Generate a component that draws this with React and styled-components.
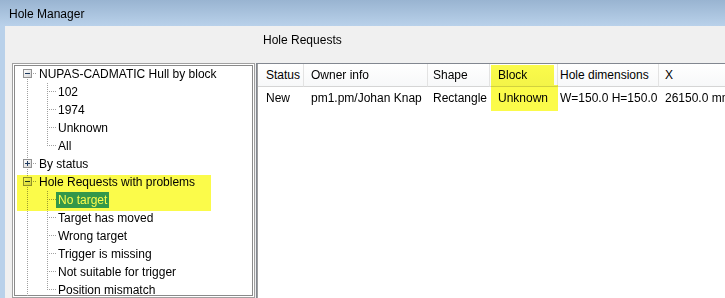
import React from 'react'
import styled, { createGlobalStyle } from 'styled-components'

const GlobalStyle = createGlobalStyle`
  body {
    margin: 0;
    font-family: "Liberation Sans", Arial, sans-serif;
    font-size: 12px;
    color: #000;
    background: #f0f0f0;
    overflow: hidden;
  }
`

const Window = styled.div`
  width: 725px;
  height: 298px;
  display: flex;
  flex-direction: column;
  overflow: hidden;
`

const TitleBar = styled.div`
  height: 26px;
  flex: none;
  display: flex;
  align-items: center;
  padding-left: 9px;
  padding-top: 1px;
  box-sizing: border-box;
  background: linear-gradient(#99b4d1, #b9d1ea);
`

const Body = styled.div`
  flex: 1;
  min-height: 0;
  display: flex;
  flex-direction: column;
  border-left: 5px solid #b9d1ea;
  background: #f0f0f0;
  padding-left: 7px;
`

const Heading = styled.div`
  height: 37px;
  flex: none;
  box-sizing: border-box;
  padding: 7px 0 0 251px;
  line-height: 14px;
`

const Panes = styled.div`
  flex: 1;
  min-height: 0;
  display: flex;
`

const TreeBox = styled.div`
  width: 243px;
  flex: none;
  box-sizing: border-box;
  border: 1px solid #a0a0a0;
  box-shadow: inset 0 0 0 1px #fff, inset 0 0 0 2px #8a8a8a;
  background: #fff;
  padding: 1px 2px 0 2px;
  overflow: hidden;
`

const TreeRow = styled.div`
  height: 18px;
  display: flex;
  align-items: center;
  white-space: nowrap;
`

const Label = styled.span`
  padding: 0 2px;
  height: 16px;
  line-height: 16px;
  background: ${p => (p.$selected ? '#3399ff' : 'transparent')};
  color: ${p => (p.$selected ? '#fff' : '#000')};
`

const Marked = styled.div`
  position: relative;
  &::after {
    content: '';
    position: absolute;
    left: 2px;
    width: 194px;
    top: 2px;
    bottom: -2px;
    background: #fbfb4a;
    mix-blend-mode: multiply;
    pointer-events: none;
  }
`

const TablePanel = styled.div`
  flex: 1;
  min-width: 0;
  margin-left: 1px;
  border: 1px solid #828790;
  border-right: none;
  border-bottom: none;
  box-shadow: inset 1px 0 0 #a0a0a0;
  background: #fff;
  overflow: hidden;
`

const Grid = styled.div`
  display: grid;
  grid-template-columns: ${p => p.$cols};
  padding-left: 1px;
`

const HeadCell = styled.div`
  position: relative;
  height: 23px;
  box-sizing: border-box;
  display: flex;
  align-items: center;
  padding-left: ${p => p.$pad}px;
  border-right: 1px solid #e3e3e3;
  border-bottom: 1px solid #d5d5d5;
  background: linear-gradient(#ffffff, #f7f8f9);
  white-space: nowrap;
  ${p => p.$marked && `
    &::after {
      content: '';
      position: absolute;
      left: 1px;
      right: 3px;
      top: 1px;
      bottom: 1px;
      background: #fbfb4a;
      mix-blend-mode: multiply;
    }
  `}
`

const Cell = styled.div`
  position: relative;
  height: 21px;
  display: flex;
  align-items: center;
  padding-left: ${p => p.$pad}px;
  white-space: nowrap;
  ${p => p.$marked && `
    &::after {
      content: '';
      position: absolute;
      left: 1px;
      right: 0;
      top: -2px;
      bottom: -3px;
      background: #fbfb4a;
      mix-blend-mode: multiply;
    }
  `}
`

// dotted connector lines + expander box, drawn per row
const Dots = ({ x1, y1, x2, y2 }) => (
  <line
    x1={x1}
    y1={y1}
    x2={x2}
    y2={y2}
    stroke="#a0a0a0"
    strokeDasharray="1 1"
    shapeRendering="crispEdges"
  />
)

const Expander = ({ open }) => (
  <g shapeRendering="crispEdges">
    <rect x="8.5" y="4.5" width="8" height="8" fill="url(#boxfill)" stroke="#919191" />
    <line x1="10" y1="8.5" x2="15" y2="8.5" stroke="#1e3a5f" />
    {!open && <line x1="12.5" y1="6" x2="12.5" y2="11" stroke="#1e3a5f" />}
  </g>
)

const RootGuide = ({ first, open }) => (
  <svg width="22" height="18" style={{ flex: 'none' }}>
    <defs>
      <linearGradient id="boxfill" x1="0" y1="0" x2="1" y2="1">
        <stop offset="0" stopColor="#ffffff" />
        <stop offset="1" stopColor="#d4d4d4" />
      </linearGradient>
    </defs>
    {!first && <Dots x1="12.5" y1="0" x2="12.5" y2="4" />}
    <Dots x1="12.5" y1="14" x2="12.5" y2="18" />
    <Dots x1="18" y1="8.5" x2="22" y2="8.5" />
    <Expander open={open} />
  </svg>
)

const ChildGuide = ({ last }) => (
  <svg width="41" height="18" style={{ flex: 'none' }}>
    <Dots x1="12.5" y1="0" x2="12.5" y2="18" />
    <Dots x1="32.5" y1="0" x2="32.5" y2={last ? 9 : 18} />
    <Dots x1="34" y1="8.5" x2="41" y2="8.5" />
  </svg>
)

const columns = [
  { label: 'Status', width: 46, pad: 8 },
  { label: 'Owner info', width: 124, pad: 7 },
  { label: 'Shape', width: 62, pad: 5 },
  { label: 'Block', width: 68, pad: 8, marked: true },
  { label: 'Hole dimensions', width: 101, pad: 2 },
  { label: 'X', width: 140, pad: 6 },
]

const rows = [
  ['New', 'pm1.pm/Johan Knap', 'Rectangle', 'Unknown', 'W=150.0 H=150.0', '26150.0 mm'],
]

const blocks = ['102', '1974', 'Unknown', 'All']
const problems = [
  'Target has moved',
  'Wrong target',
  'Trigger is missing',
  'Not suitable for trigger',
  'Position mismatch',
]

const App = () => {
  const cols = columns.map(c => `${c.width}px`).join(' ')

  return (
    <Window>
      <GlobalStyle />
      <TitleBar>Hole Manager</TitleBar>
      <Body>
        <Heading>Hole Requests</Heading>
        <Panes>
          <TreeBox>
            <TreeRow>
              <RootGuide first open />
              <Label>NUPAS-CADMATIC Hull by block</Label>
            </TreeRow>
            {blocks.map((b, i) => (
              <TreeRow key={b}>
                <ChildGuide last={i === blocks.length - 1} />
                <Label>{b}</Label>
              </TreeRow>
            ))}
            <TreeRow>
              <RootGuide />
              <Label>By status</Label>
            </TreeRow>
            <Marked>
              <TreeRow>
                <RootGuide open />
                <Label>Hole Requests with problems</Label>
              </TreeRow>
              <TreeRow>
                <ChildGuide />
                <Label $selected>No target</Label>
              </TreeRow>
            </Marked>
            {problems.map((p, i) => (
              <TreeRow key={p}>
                <ChildGuide last={i === problems.length - 1} />
                <Label>{p}</Label>
              </TreeRow>
            ))}
          </TreeBox>

          <TablePanel>
            <Grid $cols={cols}>
              {columns.map(c => (
                <HeadCell key={c.label} $pad={c.pad} $marked={c.marked}>
                  {c.label}
                </HeadCell>
              ))}
              {rows.map((r, ri) =>
                r.map((v, ci) => (
                  <Cell key={ri + '-' + ci} $pad={columns[ci].pad} $marked={columns[ci].marked}>
                    {v}
                  </Cell>
                ))
              )}
            </Grid>
          </TablePanel>
        </Panes>
      </Body>
    </Window>
  )
}

export default App
